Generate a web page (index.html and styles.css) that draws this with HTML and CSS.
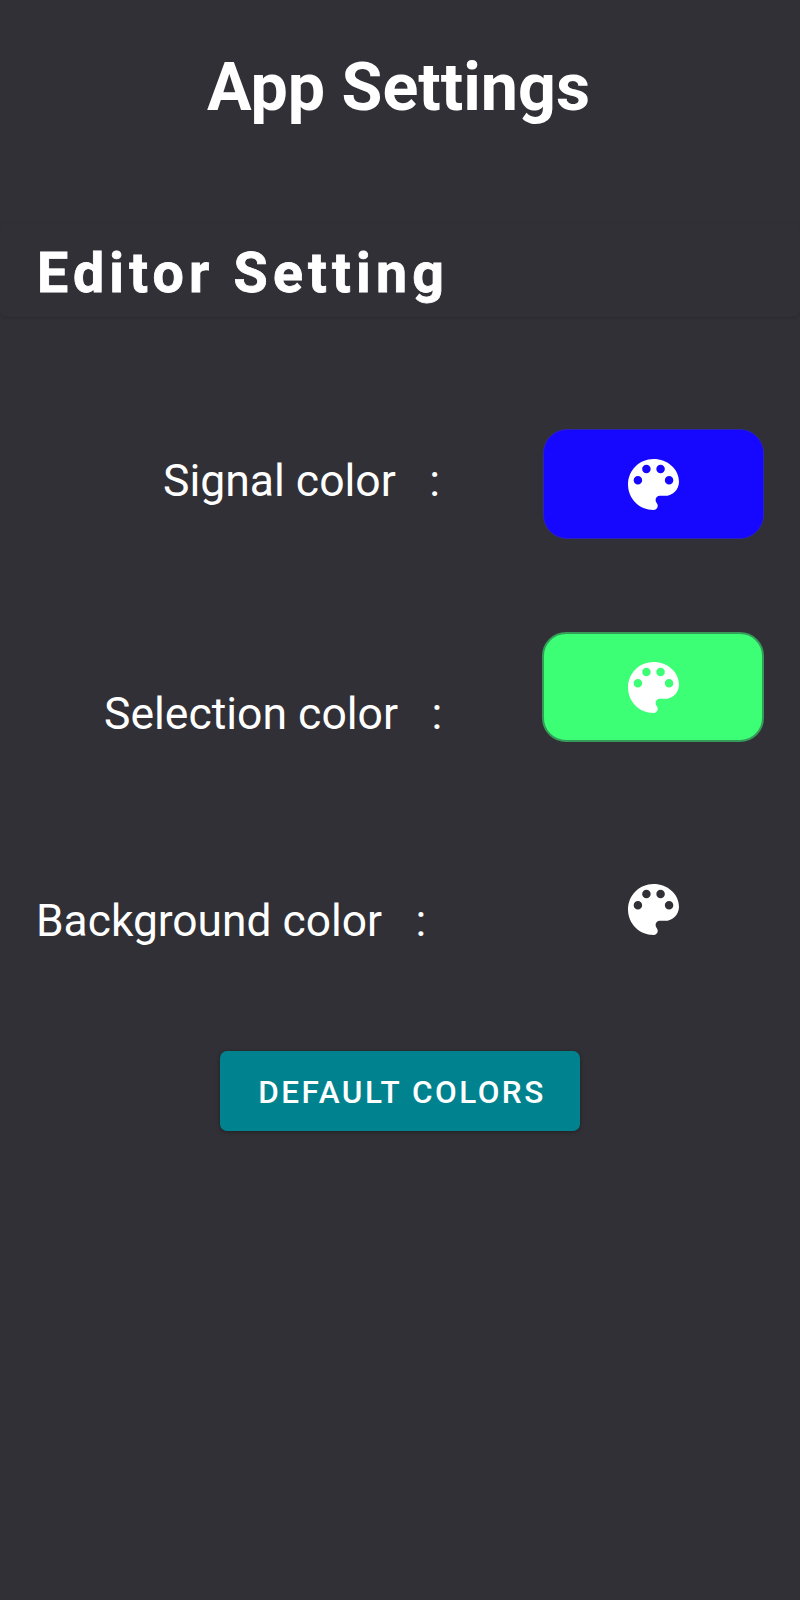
FILE: index.html
```html
<!DOCTYPE html>
<html lang="en">
<head>
<meta charset="utf-8">
<title>App Settings</title>
<link rel="stylesheet" href="styles.css">
</head>
<body>
<svg class="defs" width="0" height="0" aria-hidden="true">
<symbol id="palette" viewBox="3 3 18 18"><path d="M12 3c-4.970 0-9 4.030-9 9s4.030 9 9 9c.83 0 1.500-.67 1.500-1.500 0-.39-.15-.74-.39-1.010-.23-.26-.38-.61-.38-.99 0-.83.67-1.500 1.500-1.500H16c2.760 0 5-2.240 5-5 0-4.420-4.030-8-9-8zm-5.500 9c-.83 0-1.500-.67-1.500-1.500S5.670 9 6.500 9 8 9.670 8 10.500 7.330 12 6.500 12zm3-4C8.670 8 8 7.330 8 6.500S8.670 5 9.500 5s1.500.67 1.500 1.500S10.330 8 9.500 8zm5 0c-.83 0-1.500-.67-1.500-1.500S13.670 5 14.500 5s1.500.67 1.500 1.500S15.330 8 14.500 8zm3 4c-.83 0-1.500-.67-1.500-1.500S16.670 9 17.500 9s1.500.67 1.500 1.500-.67 1.500-1.500 1.500z"/></symbol>
</svg>
<main class="screen">
<h1 class="title">App Settings</h1>
<h2 class="section">Editor Setting</h2>
<div class="row signal"><span class="label">Signal color</span><span class="colon">:</span><button class="swatch"><svg class="icon"><use href="#palette"/></svg></button></div>
<div class="row selection"><span class="label">Selection color</span><span class="colon">:</span><button class="swatch"><svg class="icon"><use href="#palette"/></svg></button></div>
<div class="row background"><span class="label">Background color</span><span class="colon">:</span><button class="swatch"><svg class="icon"><use href="#palette"/></svg></button></div>
<button class="reset">DEFAULT COLORS</button>
</main>
</body>
</html>
```
FILE: styles.css
```css
* { box-sizing: border-box; }
body { margin: 0; background: #313036; color: #fff; font-family: Roboto, sans-serif; }
.defs { display: block; position: absolute; }
.screen { display: flex; flex-direction: column; height: 1600px; overflow: hidden; }
.title { margin: 0; padding: 48px 3px 0 0; height: 223px; text-align: center; font-size: 66.4px; line-height: 78px; font-weight: 700; white-space: nowrap; }
.section { margin: 0; height: 94px; padding: 19px 37px 0 37px; font-size: 55.5px; line-height: 64px; font-weight: 700; letter-spacing: 5.2px; -webkit-text-stroke: 0.8px #fff; border-radius: 8px; box-shadow: 0 1px 3px rgba(0,0,0,.16); white-space: nowrap; }
.row { display: flex; align-items: flex-start; height: 110px; padding-right: 36px; font-size: 44.5px; line-height: 54px; white-space: nowrap; }
.colon { margin-left: 33.5px; }
.swatch { margin-left: auto; width: 221px; height: 110px; padding: 0; border: 1px solid transparent; border-radius: 24px; color: #fff; display: grid; place-items: center; }
.icon { width: 51px; height: 51px; fill: currentColor; }
.signal { margin-top: 112px; padding-left: 163px; }
.selection { margin-top: 93px; padding-left: 104px; }
.background { margin-top: 112px; padding-left: 36px; font-size: 44.3px; }
.signal .label, .signal .colon { padding-top: 25px; }
.selection .label, .selection .colon { padding-top: 55px; }
.background .label, .background .colon { padding-top: 40px; }
.signal .swatch { background: #1607ff; border-color: #2c24b5; }
.selection .swatch { background: #3cff76; border-color: #349c58; border-width: 2px; width: 222px; }
.background .swatch { background: transparent; }
.reset { align-self: center; margin-top: 87px; width: 360px; height: 80px; border: 0; border-radius: 7px; background: #01838f; color: #fff; font: 500 31.5px/80px Roboto, sans-serif; letter-spacing: 2.5px; padding: 2px 0 0 4px; box-shadow: 0 1px 4px rgba(0,0,0,.35); white-space: nowrap; }
```
